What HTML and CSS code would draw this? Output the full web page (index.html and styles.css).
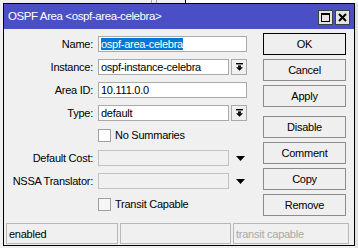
FILE: index.html
```html
<!DOCTYPE html>
<html>
<head>
<meta charset="utf-8">
<link rel="stylesheet" href="styles.css">
</head>
<body>
<div class="desk">
  <div class="dialog">
    <div class="titlebar">
      <span class="title">OSPF Area &lt;ospf-area-celebra&gt;</span>
      <div class="tbtns">
        <span class="tbtn"><svg width="9" height="9" viewBox="0 0 9 9"><rect x="0.5" y="0.5" width="8" height="8" fill="none" stroke="#000"/><rect x="0" y="0" width="9" height="2" fill="#000"/></svg></span>
        <span class="tbtn"><svg width="9" height="9" viewBox="0 0 9 9"><path d="M1 1L8 8M8 1L1 8" stroke="#000" stroke-width="2"/></svg></span>
      </div>
    </div>
    <div class="body">
      <div class="form">
        <span class="lbl">Name:</span>
        <div class="field"><div class="input"><span class="sel">ospf-area-celebra</span></div></div>

        <span class="lbl">Instance:</span>
        <div class="field"><div class="input">ospf-instance-celebra</div><span class="dd"><svg width="7" height="8" viewBox="0 0 7 8"><rect x="0" y="0" width="7" height="1.4" fill="#000"/><rect x="2" y="2.4" width="3" height="2" fill="#000"/><polygon points="0,4.2 7,4.2 3.5,7.8" fill="#000"/></svg></span></div>

        <span class="lbl">Area ID:</span>
        <div class="field"><div class="input">10.111.0.0</div></div>

        <span class="lbl">Type:</span>
        <div class="field"><div class="input">default</div><span class="dd"><svg width="7" height="8" viewBox="0 0 7 8"><rect x="0" y="0" width="7" height="1.4" fill="#000"/><rect x="2" y="2.4" width="3" height="2" fill="#000"/><polygon points="0,4.2 7,4.2 3.5,7.8" fill="#000"/></svg></span></div>

        <span></span>
        <div class="check"><span class="box"></span><span>No Summaries</span></div>

        <span class="lbl">Default Cost:</span>
        <div class="field"><div class="input dis"></div><span class="arr"><svg width="9" height="5" viewBox="0 0 9 5"><polygon points="0,0 9,0 4.5,5" fill="#000"/></svg></span></div>

        <span class="lbl">NSSA Translator:</span>
        <div class="field"><div class="input dis"></div><span class="arr"><svg width="9" height="5" viewBox="0 0 9 5"><polygon points="0,0 9,0 4.5,5" fill="#000"/></svg></span></div>

        <span></span>
        <div class="check"><span class="box dbox"></span><span>Transit Capable</span></div>
      </div>
      <div class="buttons">
        <div class="btn def">OK</div>
        <div class="btn">Cancel</div>
        <div class="btn">Apply</div>
        <div class="btn sep">Disable</div>
        <div class="btn">Comment</div>
        <div class="btn">Copy</div>
        <div class="btn">Remove</div>
      </div>
    </div>
    <div class="status">
      <div class="panel p1">enabled</div>
      <div class="panel p2"></div>
      <div class="panel p3">transit capable</div>
    </div>
  </div>
</div>
</body>
</html>
```

FILE: styles.css
```css
html, body {
  margin: 0;
  padding: 0;
}
body {
  width: 358px;
  height: 248px;
  overflow: hidden;
  background: #f0f0f0;
  font-family: "Liberation Sans", Arial, sans-serif;
  font-size: 11px;
  letter-spacing: -0.25px;
  color: #000;
}
.desk {
  height: 248px;
  box-sizing: border-box;
  padding: 3px 0 0 3px;
  background:
    linear-gradient(#000, #000) 185px 0 / 1px 3px no-repeat,
    linear-gradient(#fff, #fff) 186px 0 / 172px 3px no-repeat,
    linear-gradient(#a8a8a8, #a8a8a8) 151px 0 / 1px 3px no-repeat,
    linear-gradient(#a8a8a8, #a8a8a8) 156px 0 / 1px 3px no-repeat,
    linear-gradient(to right, #f0f0f0 355px, #e2e2e2 355px);
}
.dialog {
  width: 352px;
  height: 243px;
  box-sizing: border-box;
  border: 1px solid #000;
  background: #f0f0f0;
  display: flex;
  flex-direction: column;
}
.titlebar {
  height: 25px;
  flex: none;
  background: #4b4fc6;
  color: #fff;
  font-size: 11.5px;
  letter-spacing: -0.4px;
  display: flex;
  align-items: center;
  justify-content: space-between;
  padding: 0 4px 0 4px;
}
.title {
  margin-top: -1px;
}
.tbtns {
  display: flex;
  gap: 2px;
  margin-top: 1px;
}
.tbtn {
  width: 15px;
  height: 15px;
  box-sizing: border-box;
  border: 1px solid #404040;
  background: #e4e4e4;
  display: flex;
  align-items: center;
  justify-content: center;
}
.body {
  flex: 1;
  display: flex;
  padding: 4px 8px 0 0;
}
.form {
  width: 243px;
  margin-top: 3px;
  display: grid;
  grid-template-columns: 89px 149px;
  column-gap: 5px;
  grid-auto-rows: 16px;
  row-gap: 6.86px;
  align-items: center;
  align-content: start;
}
.lbl {
  text-align: right;
  white-space: nowrap;
}
.field {
  display: flex;
  align-items: center;
  gap: 2px;
  height: 16px;
}
.input {
  flex: 1;
  height: 16px;
  box-sizing: border-box;
  border: 1px solid #a9a9a9;
  background: #fff;
  padding: 0 2px;
  display: flex;
  align-items: center;
  white-space: nowrap;
  overflow: hidden;
}
.input.dis {
  background: #f0f0f0;
  border-color: #c2c2c2;
}
.sel {
  background: #0078d7;
  color: #fff;
}
.dd {
  width: 16px;
  height: 16px;
  box-sizing: border-box;
  border: 1px solid #a9a9a9;
  background: #f0f0f0;
  display: flex;
  align-items: center;
  justify-content: center;
}
.arr {
  width: 16px;
  height: 16px;
  display: flex;
  align-items: center;
  justify-content: center;
  padding-left: 2px;
  box-sizing: border-box;
}
.check {
  display: flex;
  align-items: center;
  gap: 4px;
}
.box {
  width: 13px;
  height: 13px;
  box-sizing: border-box;
  border: 1px solid #a0a0a0;
  background: #fff;
}
.dbox {
  background: #f6f6f6;
}
.buttons {
  width: 83px;
  margin-left: 16px;
  display: flex;
  flex-direction: column;
  gap: 4px;
}
.btn {
  height: 22px;
  box-sizing: border-box;
  border: 1px solid #8c8c8c;
  background: #efefef;
  display: flex;
  align-items: center;
  justify-content: center;
}
.btn.def {
  border-color: #000;
}
.btn.sep {
  margin-top: 5px;
}
.status {
  flex: none;
  display: flex;
  gap: 2px;
  padding: 0 0 1px 2px;
}
.panel {
  height: 21px;
  box-sizing: border-box;
  border: 1px solid #b8b8b8;
  padding-left: 2px;
  display: flex;
  align-items: center;
}
.p1 { width: 112px; }
.p2 { width: 111px; }
.p3 { width: 116px; color: #a8a8a8; }
```
